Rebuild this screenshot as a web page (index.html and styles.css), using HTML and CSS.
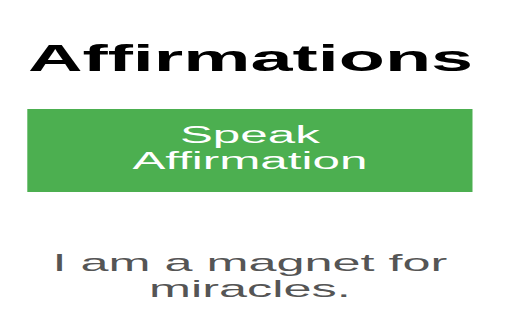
FILE: index.html
```html
<!DOCTYPE html>
<html>
<head>
<meta charset="utf-8">
<link rel="stylesheet" href="styles.css">
</head>
<body>
<div class="page">
  <h1 class="title">Affirmations</h1>
  <button class="speak">Speak Affirmation</button>
  <p class="affirmation">I am a magnet for miracles.</p>
</div>
</body>
</html>
```
FILE: styles.css
```css
html, body {
  margin: 0;
  padding: 0;
  background: #ffffff;
  overflow: hidden;
}
.page {
  width: 238px;
  box-sizing: border-box;
  padding: 0 13.3px;
  transform: scale(2.1, 1);
  transform-origin: 0 0;
  display: flex;
  flex-direction: column;
  align-items: stretch;
  text-align: center;
  font-family: "Liberation Sans", Arial, sans-serif;
}
.title {
  margin: 38.4px 0 29px;
  font-size: 36px;
  line-height: 42px;
  font-weight: bold;
  color: #000000;
}
.speak {
  display: block;
  width: 100%;
  margin: 0;
  border: none;
  padding: 12.6px 30px 18.1px;
  background: #4caf50;
  color: #ffffff;
  font-family: "Liberation Sans", Arial, sans-serif;
  font-size: 23.5px;
  line-height: 26px;
}
.affirmation {
  margin: 57.8px 0 0;
  font-size: 24px;
  line-height: 26.5px;
  color: #555555;
}
```
